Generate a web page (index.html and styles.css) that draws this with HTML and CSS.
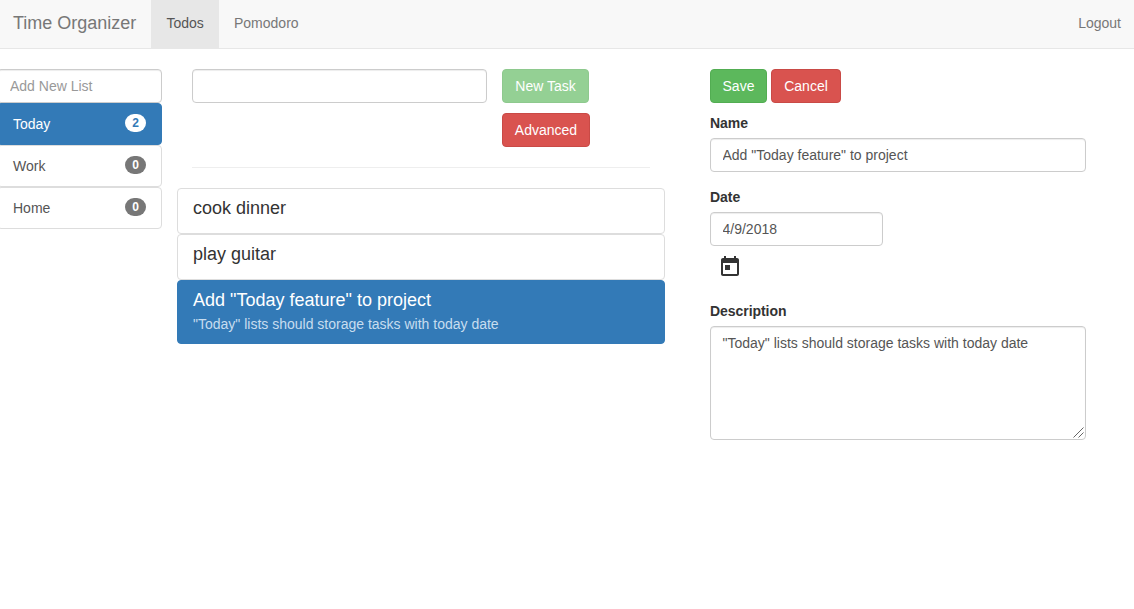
FILE: index.html
```html
<!DOCTYPE html>
<html lang="en">
<head>
<meta charset="utf-8">
<title>Time Organizer</title>
<link rel="stylesheet" href="styles.css">
</head>
<body>
<nav class="navbar">
  <a class="brand">Time Organizer</a>
  <a class="nav-link active">Todos</a>
  <a class="nav-link">Pomodoro</a>
  <a class="nav-link logout">Logout</a>
</nav>
<main class="layout">
  <aside class="lists">
    <input class="control" type="text" placeholder="Add New List">
    <a class="list-item active"><span>Today</span><span class="badge">2</span></a>
    <a class="list-item"><span>Work</span><span class="badge">0</span></a>
    <a class="list-item"><span>Home</span><span class="badge">0</span></a>
  </aside>
  <section class="tasks">
    <div class="new-task">
      <input class="control" type="text">
      <div class="actions">
        <button class="btn success new disabled">New Task</button>
        <button class="btn danger">Advanced</button>
      </div>
    </div>
    <hr class="divider">
    <a class="task"><h4 class="task-title">cook dinner</h4></a>
    <a class="task"><h4 class="task-title">play guitar</h4></a>
    <a class="task active">
      <h4 class="task-title">Add "Today feature" to project</h4>
      <p class="task-text">"Today" lists should storage tasks with today date</p>
    </a>
  </section>
  <section class="details">
    <div class="buttons">
      <button class="btn success save">Save</button>
      <button class="btn danger cancel">Cancel</button>
    </div>
    <label class="label" for="name">Name</label>
    <input class="control name" id="name" type="text" value='Add "Today feature" to project'>
    <label class="label" for="date">Date</label>
    <input class="control date" id="date" type="text" value="4/9/2018">
    <svg class="calendar" viewBox="0 0 24 24"><path d="M19 3h-1V1h-2v2H8V1H6v2H5c-1.11 0-1.99.9-1.99 2L3 19c0 1.1.89 2 2 2h14c1.1 0 2-.9 2-2V5c0-1.1-.9-2-2-2zm0 16H5V8h14v11zM7 10h5v5H7z"/></svg>
    <label class="label" for="description">Description</label>
    <div class="textarea-wrap">
      <textarea class="control description" id="description">"Today" lists should storage tasks with today date</textarea>
      <svg class="grip" viewBox="0 0 11 11"><path d="M.5 10.5l10-10M5.5 10.5l5-5"/></svg>
    </div>
  </section>
</main>
</body>
</html>
```
FILE: styles.css
```css
* { box-sizing: border-box; }
body {
  margin: 0;
  overflow: hidden;
  background: #fff;
  color: #333;
  font: 14px/20px "Liberation Sans", Arial, sans-serif;
}
.navbar {
  display: flex;
  height: 49px;
  background: #f8f8f8;
  border-bottom: 1px solid #e7e7e7;
  color: #777;
}
.brand { width: 151px; padding: 13px 0 0 13px; font-size: 18px; white-space: nowrap; }
.nav-link { padding: 13px 15px 15px; }
.nav-link.active { width: 68px; padding-left: 15.5px; background: #e7e7e7; color: #555; }
.logout { margin-left: auto; padding-right: 13px; }
.layout { display: flex; align-items: flex-start; padding-top: 20px; }
.control {
  display: block;
  width: 100%;
  height: 34px;
  margin: 0;
  padding: 6px 12px;
  border: 1px solid #ccc;
  border-radius: 4px;
  background: #fff;
  box-shadow: inset 0 1px 1px rgba(0, 0, 0, .075);
  color: #555;
  font: inherit;
}
.control::placeholder { color: #999; }
.lists { width: 165px; margin-left: -3px; }
.list-item {
  display: flex;
  justify-content: space-between;
  height: 42px;
  padding: 10px 15px;
  border: 1px solid #ddd;
  border-radius: 4px;
  color: #555;
}
.badge {
  height: 18px;
  padding: 3px 7px;
  border-radius: 10px;
  background: #777;
  color: #fff;
  font-size: 12px;
  font-weight: bold;
  line-height: 12px;
}
.list-item.active, .task.active { background: #337ab7; border-color: #337ab7; color: #fff; }
.active .badge { background: #fff; color: #337ab7; }
.tasks { width: 488px; margin-left: 15px; }
.new-task { display: flex; gap: 15px; padding-left: 15px; }
.new-task .control { width: 295px; }
.actions { display: flex; flex-direction: column; align-items: flex-start; gap: 10px; }
.btn {
  width: 88px;
  height: 34px;
  margin: 0;
  padding: 6px 0;
  border: 1px solid;
  border-radius: 4px;
  color: #fff;
  font: inherit;
}
.new { width: 87px; }
.save { width: 57px; }
.cancel { width: 70px; }
.success { background: #5cb85c; border-color: #52ad52; }
.danger { background: #d9534f; border-color: #c94a46; }
.disabled { opacity: .65; }
.divider { height: 1px; margin: 20px 15px; border: 0; background: #eee; }
.task { display: block; height: 46px; padding: 9px 15px; border: 1px solid #ddd; border-radius: 4px; }
.task.active { height: 64px; }
.task-title { margin: 0 0 5px; font-size: 18px; font-weight: 400; line-height: 20px; }
.task-text { margin: 0; color: #c7ddef; line-height: 18px; }
.details { width: 376px; margin-left: 45px; }
.details .control { padding-left: 11.5px; }
.buttons { display: flex; gap: 4px; margin-bottom: 10px; }
.label { display: block; margin-bottom: 5px; font-weight: bold; letter-spacing: -.05px; }
.name { margin-bottom: 15px; }
.date { width: 173px; }
.calendar { display: block; width: 24px; height: 24px; margin: 9px 0 22px 8px; fill: #333; }
.textarea-wrap { position: relative; }
.description { height: 114px; resize: none; }
.grip {
  position: absolute;
  right: 2px;
  bottom: 2px;
  width: 11px;
  height: 11px;
  fill: none;
  stroke: #555;
  stroke-width: .9;
}
```
